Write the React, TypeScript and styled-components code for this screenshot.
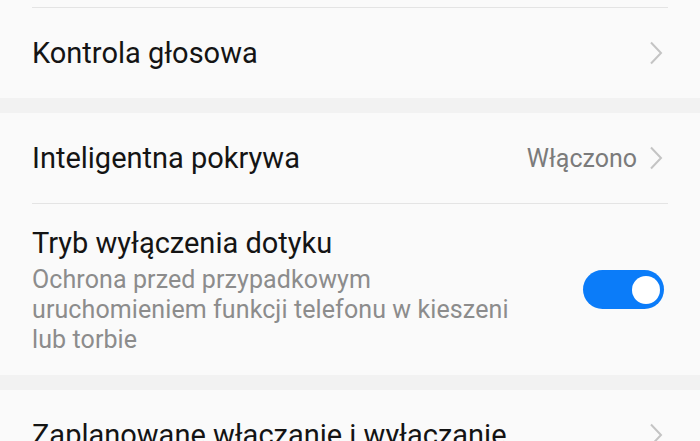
import styled, { createGlobalStyle } from "styled-components";

const GlobalStyle = createGlobalStyle`
  html, body {
    margin: 0;
    padding: 0;
    background: #fafafa;
    font-family: Roboto, "Noto Sans", "Liberation Sans", sans-serif;
    -webkit-font-smoothing: antialiased;
  }
`;

const Page = styled.div`
  width: 700px;
  height: 441px;
  overflow: hidden;
  background: #f2f2f2;
  display: flex;
  flex-direction: column;
  gap: 15px;
`;

const Group = styled.section`
  background: #fafafa;
  display: flex;
  flex-direction: column;
`;

const TopSpace = styled.div`
  height: 7px;
`;

const Divider = styled.div`
  height: 1px;
  margin: 0 32px;
  background: #e4e4e4;
`;

const Row = styled.div<{ $height: number }>`
  height: ${(p) => p.$height}px;
  padding: 0 37px 0 32px;
  display: flex;
  align-items: center;
  gap: 14px;
`;

const TextCol = styled.div`
  flex: 1;
  display: flex;
  flex-direction: column;
  min-width: 0;
`;

const Title = styled.div`
  font-size: 29px;
  line-height: 36px;
  color: #141414;
  white-space: nowrap;
`;

const Subtitle = styled.div`
  font-size: 25px;
  line-height: 30px;
  letter-spacing: 0.1px;
  color: #8c8c8c;
  max-width: 500px;
  margin-top: 4px;
`;

const Value = styled.span`
  font-size: 25px;
  color: #7b7b7b;
  margin-right: -2px;
`;

const Toggle = styled.div<{ $on: boolean }>`
  width: 81px;
  height: 39px;
  border-radius: 20px;
  background: ${(p) => (p.$on ? "#0b7cf9" : "#cfcfcf")};
  display: flex;
  align-items: center;
  justify-content: ${(p) => (p.$on ? "flex-end" : "flex-start")};
  padding: 0 4px 0 5px;
  box-sizing: border-box;
  margin-right: -1px;
`;

const Knob = styled.div`
  width: 28px;
  height: 28px;
  border-radius: 50%;
  background: #ffffff;
`;

const Chevron = () => (
  <svg width="14" height="24" viewBox="0 0 14 24" fill="none">
    <path d="M2 1.5 L12 12 L2 22.5" stroke="#c4c4c4" strokeWidth="2" />
  </svg>
);

export default function App() {
  return (
    <>
      <GlobalStyle />
      <Page>
        <Group>
          <TopSpace />
          <Divider />
          <Row $height={90}>
            <TextCol>
              <Title>Kontrola głosowa</Title>
            </TextCol>
            <Chevron />
          </Row>
        </Group>
        <Group>
          <Row $height={90}>
            <TextCol>
              <Title>Inteligentna pokrywa</Title>
            </TextCol>
            <Value>Włączono</Value>
            <Chevron />
          </Row>
          <Divider />
          <Row $height={171}>
            <TextCol>
              <Title>Tryb wyłączenia dotyku</Title>
              <Subtitle>
                Ochrona przed przypadkowym uruchomieniem funkcji telefonu w
                kieszeni lub torbie
              </Subtitle>
            </TextCol>
            <Toggle $on>
              <Knob />
            </Toggle>
          </Row>
        </Group>
        <Group>
          <Row $height={90}>
            <TextCol>
              <Title>Zaplanowane włączanie i wyłączanie</Title>
            </TextCol>
            <Chevron />
          </Row>
        </Group>
      </Page>
    </>
  );
}
